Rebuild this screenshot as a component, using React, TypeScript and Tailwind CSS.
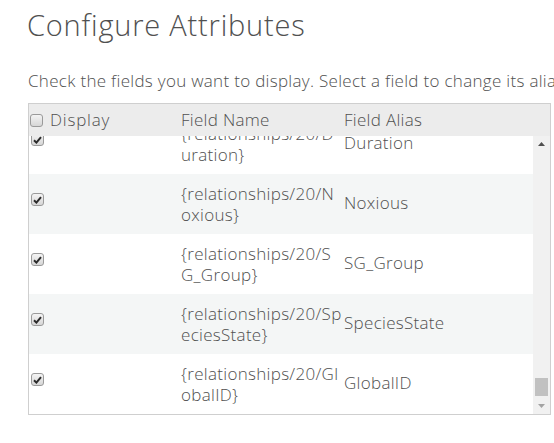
import React from 'react';

const rows = [
  { name: '{relationships/20/Duration}', alias: 'Duration' },
  { name: '{relationships/20/Noxious}', alias: 'Noxious' },
  { name: '{relationships/20/SG_Group}', alias: 'SG_Group' },
  { name: '{relationships/20/SpeciesState}', alias: 'SpeciesState' },
  { name: '{relationships/20/GlobalID}', alias: 'GlobalID' },
];

const Check: React.FC<{ checked?: boolean }> = ({ checked }) => (
  <span className="w-[13px] h-[13px] rounded-[3px] border border-[#9a9a9a] bg-gradient-to-b from-[#f4f4f4] to-[#d6d6d6] flex items-center justify-center shrink-0">
    {checked && (
      <svg width="9" height="8" viewBox="0 0 9 8">
        <path d="M1 4.2 L3.4 6.6 L8 1.2" stroke="#2b2b2b" strokeWidth="2" fill="none" />
      </svg>
    )}
  </span>
);

export default function App() {
  return (
    <div className="w-[554px] h-[443px] overflow-hidden bg-white text-[#505050] font-['Open_Sans','Liberation_Sans',sans-serif] font-light">
      {/* Title */}
      <h1 className="pl-[27px] pt-[7px] text-[29px] tracking-[0.8px] leading-[36px] whitespace-nowrap">Configure Attributes</h1>
      <p className="pl-[28px] mt-[28px] text-[17px] tracking-[0.3px] leading-[20px] whitespace-nowrap">
        Check the fields you want to display. Select a field to change its alias.
      </p>

      {/* Table */}
      <div className="ml-[28px] mt-[12px] w-[523px] border border-[#cfcfcf] text-[17px] tracking-[0.3px]">
        <div className="grid grid-cols-[152px_163px_1fr] h-[32px] items-center bg-[#ececec]">
          <div className="flex items-center gap-[7px] pl-[1px] tracking-[0.8px]">
            <Check />
            <span>Display</span>
          </div>
          <div>Field Name</div>
          <div>Field Alias</div>
        </div>

        <div className="flex h-[278px]">
          <div className="flex-1 overflow-hidden">
            <div className="-mt-[22px]">
              {rows.map((r, i) => (
                <div
                  key={r.alias}
                  className={`grid grid-cols-[152px_163px_1fr] h-[60px] items-center ${i % 2 === 1 ? 'bg-[#f4f6f6]' : 'bg-white'}`}
                >
                  <div className="pl-[2px] self-start pt-[19px]">
                    <Check checked />
                  </div>
                  <div className="break-all leading-[21px] pr-[2px]">{r.name}</div>
                  <div className="self-start pt-[18px] leading-[21px]">{r.alias}</div>
                </div>
              ))}
            </div>
          </div>

          {/* Scrollbar */}
          <div className="w-[17px] bg-[#f1f1f1] flex flex-col items-center justify-between py-[6px]">
            <svg width="7" height="4" viewBox="0 0 7 4"><path d="M0 4 L3.5 0 L7 4 Z" fill="#505050" /></svg>
            <div className="flex-1" />
            <div className="w-[13px] h-[18px] bg-[#c1c1c1] mb-[8px]" />
            <svg width="7" height="4" viewBox="0 0 7 4"><path d="M0 0 L3.5 4 L7 0 Z" fill="#a3a3a3" /></svg>
          </div>
        </div>
      </div>
    </div>
  );
}
